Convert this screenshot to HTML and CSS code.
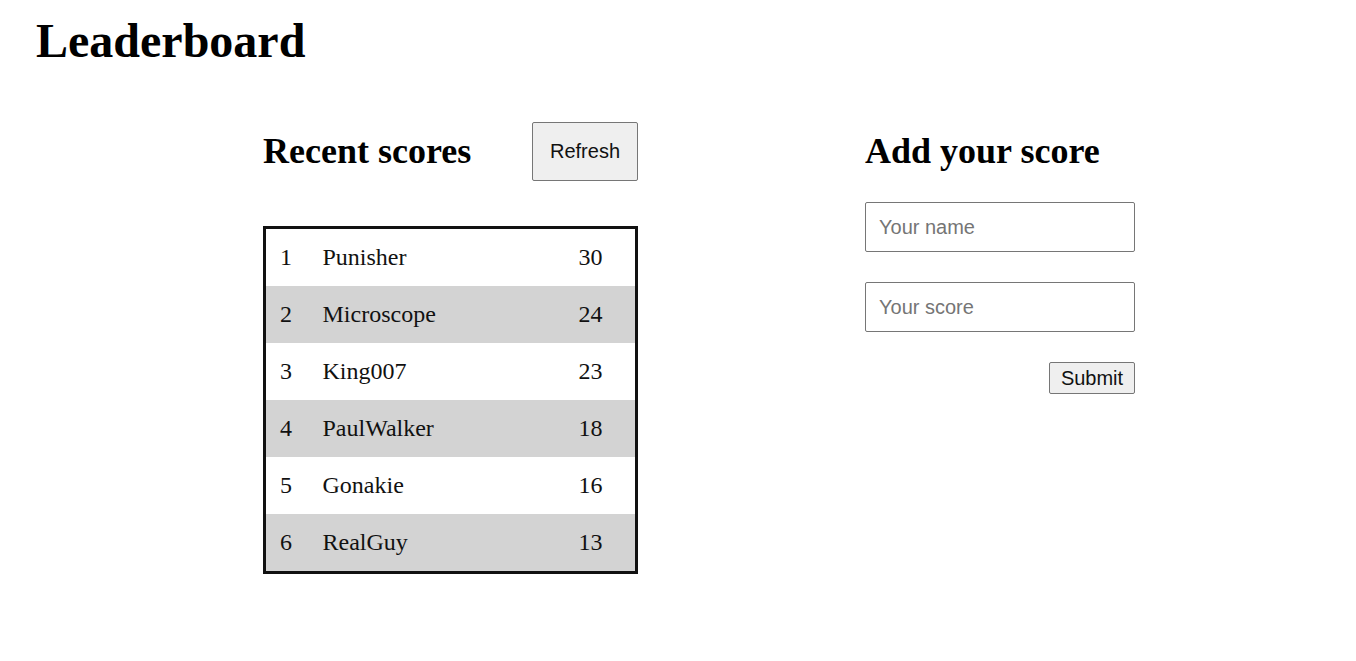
FILE: index.html
```html
<!DOCTYPE html>
<html lang="en">
<head>
<meta charset="utf-8">
<title>Leaderboard</title>
<link rel="stylesheet" href="styles.css">
</head>
<body>
<h1 class="title">Leaderboard</h1>
<main class="layout">
  <section class="scores">
    <div class="scores-head">
      <h2 class="section-title">Recent scores</h2>
      <button class="btn btn-refresh" type="button">Refresh</button>
    </div>
    <table class="board">
      <colgroup>
        <col class="col-rank">
        <col class="col-name">
        <col class="col-score">
      </colgroup>
      <tbody>
        <tr><td>1</td><td>Punisher</td><td>30</td></tr>
        <tr><td>2</td><td>Microscope</td><td>24</td></tr>
        <tr><td>3</td><td>King007</td><td>23</td></tr>
        <tr><td>4</td><td>PaulWalker</td><td>18</td></tr>
        <tr><td>5</td><td>Gonakie</td><td>16</td></tr>
        <tr><td>6</td><td>RealGuy</td><td>13</td></tr>
      </tbody>
    </table>
  </section>
  <section class="add">
    <h2 class="section-title add-title">Add your score</h2>
    <form class="add-form">
      <input class="field" type="text" placeholder="Your name">
      <input class="field" type="text" placeholder="Your score">
      <div class="form-actions">
        <button class="btn btn-submit" type="button">Submit</button>
      </div>
    </form>
  </section>
</main>
</body>
</html>
```
FILE: styles.css
```css
html, body {
  margin: 0;
  padding: 0;
  background: #fff;
  color: #000;
  font-family: "Liberation Serif", "Times New Roman", serif;
}

.title {
  margin: 13px 0 0 36px;
  font-size: 48px;
  font-weight: bold;
  line-height: 55px;
}

.layout {
  display: flex;
  align-items: flex-start;
  gap: 227px;
  padding-left: 263px;
  margin-top: 54px;
}

.scores {
  width: 375px;
  display: flex;
  flex-direction: column;
}

.scores-head {
  display: flex;
  justify-content: space-between;
  align-items: center;
  height: 59px;
}

.section-title {
  margin: 0;
  font-size: 36px;
  font-weight: bold;
  line-height: 41px;
}

.btn {
  font-family: "Liberation Sans", Arial, sans-serif;
  font-size: 20px;
  line-height: 23px;
  color: #111;
  background: #efefef;
  border: 1px solid #767676;
  border-radius: 2px;
}

.btn-refresh {
  height: 59px;
  width: 106px;
  padding: 0;
}

.board {
  margin-top: 45px;
  width: 375px;
  border-collapse: collapse;
  border: 3px solid #111;
  table-layout: fixed;
  font-size: 24px;
}

.col-rank { width: 42px; }
.col-score { width: 74px; }

.board td {
  height: 57px;
  padding: 0 0 0 16px;
  vertical-align: middle;
  color: #111;
}

.board td:first-child { padding-left: 14px; }

.board tr:nth-child(even) td {
  background: #d3d3d3;
}

.add {
  width: 270px;
  display: flex;
  flex-direction: column;
}

.add-title {
  line-height: 59px;
  height: 59px;
}

.add-form {
  margin-top: 21px;
  display: flex;
  flex-direction: column;
  gap: 30px;
}

.field {
  box-sizing: border-box;
  width: 270px;
  height: 50px;
  padding: 0 13px;
  font-family: "Liberation Sans", Arial, sans-serif;
  font-size: 20px;
  border: 1px solid #767676;
  border-radius: 2px;
  color: #000;
  background: #fff;
}

.field::placeholder {
  color: #757575;
}

.form-actions {
  display: flex;
  justify-content: flex-end;
}

.btn-submit {
  height: 32px;
  width: 86px;
  padding: 0;
}
```
